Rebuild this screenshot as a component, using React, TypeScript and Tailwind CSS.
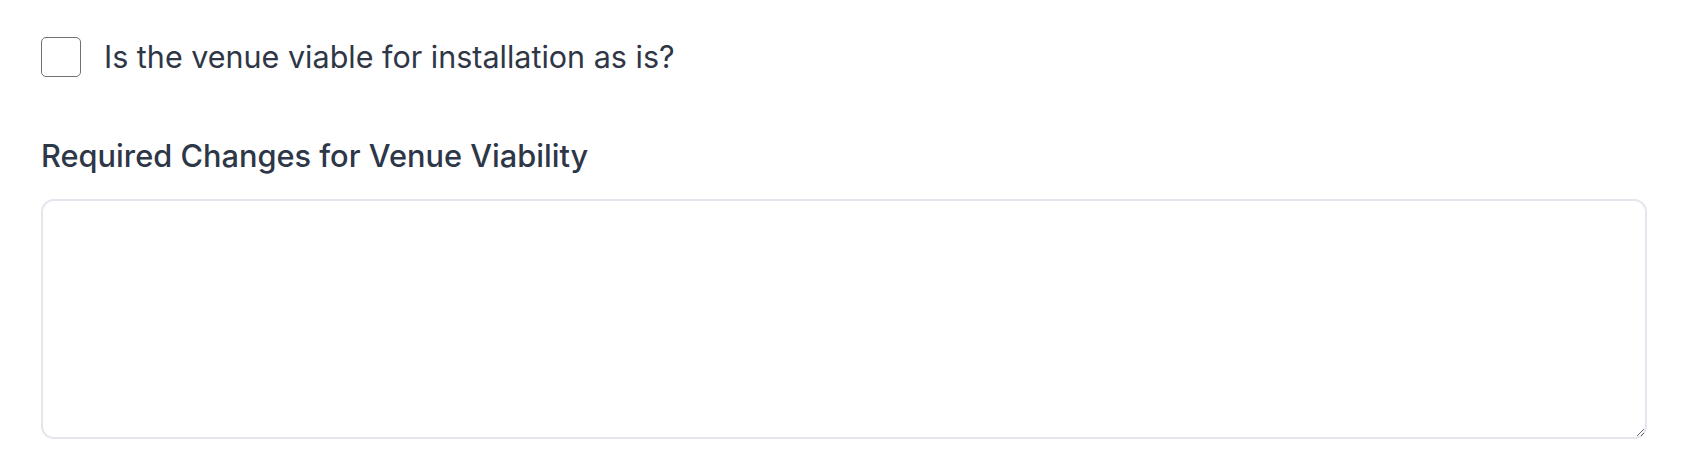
export default function App() {
  return (
    <div className="min-h-[476px] w-full bg-white pl-[41px] pr-[43px] pt-[37px] font-['Inter',sans-serif] text-[#2d3748]">
      <label className="flex items-center gap-[23px]">
        <input
          type="checkbox"
          className="h-[40px] w-[40px] shrink-0 appearance-none rounded-[5px] border-[1.5px] border-[#727272] bg-white"
        />
        <span className="text-[30.5px] leading-[40px] text-[#2f3747]">
          Is the venue viable for installation as is?
        </span>
      </label>

      <div className="mt-[59px]">
        <label className="block text-[30.75px] font-medium leading-[40px] text-[#2d3748]">
          Required Changes for Venue Viability
        </label>
        <textarea className="mt-[23px] block h-[240px] w-full resize-y rounded-[13px] border-2 border-[#e4e6ee] bg-white p-4 text-[26px] outline-none" />
      </div>
    </div>
  );
}
